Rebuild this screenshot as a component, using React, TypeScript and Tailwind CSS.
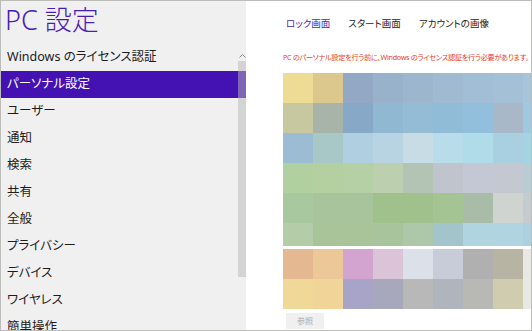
const menu = [
  'Windows のライセンス認証',
  'パーソナル設定',
  'ユーザー',
  '通知',
  '検索',
  '共有',
  '全般',
  'プライバシー',
  'デバイス',
  'ワイヤレス',
  '簡単操作',
];

// lock screen preview, 9 columns (last one is cut off by the panel edge)
const picture = [
  ['#eedc94', '#dcc88c', '#92a8c4', '#98b2cc', '#9cb6ce', '#a0bad2', '#a2bed6', '#a4c0d6', '#a8c4d8'],
  ['#c8c8a0', '#a8b4a8', '#88a8c8', '#90b8d2', '#94bcd4', '#90bcd8', '#92c0dc', '#a8b8c8', '#a0c8e0'],
  ['#9cbcd4', '#a8c8c8', '#b0d0e2', '#b8d4e2', '#c8dce6', '#b8dcea', '#b0dcea', '#a8d0e0', '#a4d4e4'],
  ['#b0d0a0', '#b4d0a0', '#b4d0a4', '#bcd0b0', '#b4c4b4', '#c0c4cc', '#c4c8d4', '#c4c8d0', '#b8ccd4'],
  ['#a8c8a0', '#a8c49c', '#a8c49c', '#a0c08c', '#a0c08c', '#a4c494', '#a8bca8', '#d0d4d0', '#c4ccd0'],
  ['#b4cca8', '#a8c498', '#a8c498', '#a8c49c', '#acc8a8', '#a4c4cc', '#b0d4e0', '#b0d4e0', '#acd0e0'],
];

const swatches = [
  ['#e4b890', '#ecc898', '#d4a4d0', '#dcc4d8', '#dce0e8', '#c8ccd8', '#b0b0b0', '#b8b4a4', '#e8e8e4'],
  ['#f0d898', '#f0d498', '#a8a4c8', '#a8a8bc', '#b8b8b8', '#b0b4bc', '#b8b8b4', '#d0ccb0', '#e8e8e4'],
];

const font = "[font-family:'Noto_Sans','Noto_Sans_CJK_JP',sans-serif] [font-feature-settings:'palt']";

function Cells({ rows }: { rows: string[][] }) {
  return (
    <div className="grid grid-cols-[repeat(9,30px)]">
      {rows.map((row, r) =>
        row.map((c, i) => (
          <div key={`${r}-${i}`} className="h-[30px]" style={{ backgroundColor: c }} />
        ))
      )}
    </div>
  );
}

export default function App() {
  return (
    <div className={`${font} flex h-[331px] w-[532px] overflow-hidden border border-[#bcbcb8] bg-white`}>
      {/* left: settings menu */}
      <aside className="relative w-[245px] shrink-0 bg-[#f0f0f0]">
        <h1 className="h-[43px] pl-[4px] pt-[1px] text-[27px] font-light leading-[36px] text-[#4a1cb6]">
          PC 設定
        </h1>
        <ul>
          {menu.map((m, i) => (
            <li
              key={m}
              className={`flex h-[27px] items-center pl-[6px] text-[12.5px] ${
                i === 1 ? 'bg-[#4412b2] text-white' : 'text-[#1c1c1c]'
              }`}
            >
              {m}
            </li>
          ))}
        </ul>

        {/* scrollbar overlay */}
        <div className="absolute right-0 top-[50px] flex w-[8px] flex-col items-center">
          <svg width="7" height="5" viewBox="0 0 7 5" className="mt-[2px]">
            <path d="M0.5 4.5 L3.5 1.5 L6.5 4.5" fill="none" stroke="#8a8a8a" strokeWidth="1" />
          </svg>
          <div className="mt-[3px] h-[216px] w-[8px] bg-[#b7b7b7]/50" />
        </div>
      </aside>

      {/* right: personalise panel */}
      <main className="flex-1 pl-[37px]">
        <nav className="ml-[3px] mt-[17px] flex gap-[18px] text-[9.5px] leading-[12px]">
          <span className="text-[#4a1cb6]">ロック画面</span>
          <span className="text-[#1c1c1c]">スタート画面</span>
          <span className="text-[#1c1c1c]">アカウントの画像</span>
        </nav>

        <p className="mt-[22px] whitespace-nowrap text-[7.2px] leading-[10px] tracking-[-0.3px] text-[#e8401c]">
          PC のパーソナル設定を行う前に、Windows のライセンス認証を行う必要があります。
        </p>

        <div className="mt-[11px] h-[173px] w-[248px] overflow-hidden">
          <Cells rows={picture} />
        </div>
        <div className="mt-[3px] w-[248px] overflow-hidden">
          <Cells rows={swatches} />
        </div>

        <button
          disabled
          className="ml-[3px] mt-[4px] flex h-[16px] w-[38px] items-center justify-center bg-[#f0f0f0] text-[8px] text-[#ababab]"
        >
          参照
        </button>
      </main>
    </div>
  );
}
